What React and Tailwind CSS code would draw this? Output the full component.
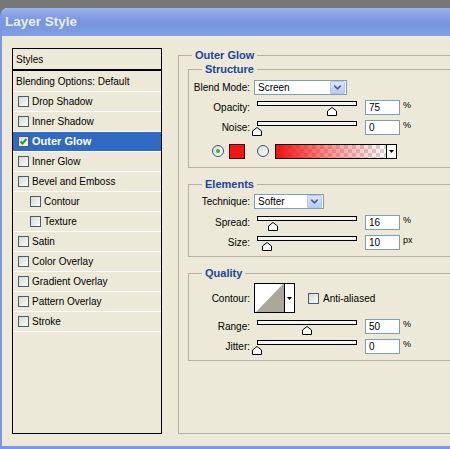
import { ChevronDown } from 'lucide-react'

const STYLE_ROWS = [
  { label: 'Drop Shadow' },
  { label: 'Inner Shadow' },
  { label: 'Outer Glow', checked: true, selected: true },
  { label: 'Inner Glow' },
  { label: 'Bevel and Emboss' },
  { label: 'Contour', indent: true },
  { label: 'Texture', indent: true },
  { label: 'Satin' },
  { label: 'Color Overlay' },
  { label: 'Gradient Overlay' },
  { label: 'Pattern Overlay' },
  { label: 'Stroke' },
]

function Checkbox({ checked }) {
  return (
    <span className="flex h-[11px] w-[11px] shrink-0 items-center justify-center border border-[#4b5a76] bg-gradient-to-br from-[#d9d9d2] to-[#fbfbf9]">
      {checked && (
        <svg width="9" height="9" viewBox="0 0 9 9">
          <path d="M1.5 4.5 L3.5 6.5 L7.5 2" fill="none" stroke="#21a121" strokeWidth="2" />
        </svg>
      )}
    </span>
  )
}

function Radio({ on }) {
  return (
    <span className="flex h-[12px] w-[12px] shrink-0 items-center justify-center rounded-full border border-[#3d5378] bg-gradient-to-br from-[#dcdcd6] to-[#fbfbfa]">
      {on && <span className="h-[4px] w-[4px] rounded-full bg-[#3fae3f]" />}
    </span>
  )
}

function Select({ value, width }) {
  return (
    <div className={`flex h-[15px] items-center justify-between border border-[#7f9db9] bg-white pl-[3px] pr-[1px] ${width}`}>
      <span>{value}</span>
      <span className="flex h-[13px] w-[15px] items-center justify-center rounded-[1px] border border-[#b4c6f2] bg-gradient-to-b from-[#dbe5fd] to-[#b6cbf8]">
        <ChevronDown size={11} strokeWidth={3.5} color="#4d6185" />
      </span>
    </div>
  )
}

function Slider({ value }) {
  return (
    <div className="relative h-[16px] w-[100px] shrink-0">
      <div className="mt-[4px] h-[5px] w-[100px] border border-black bg-[#f6f5f0]" />
      <svg className="absolute top-[6px]" style={{ left: value - 5 }} width="10" height="9" viewBox="0 0 10 9">
        <path d="M0.5 8.5 L0.5 4 L5 0.5 L9.5 4 L9.5 8.5 Z" fill="#fff" stroke="#000" />
      </svg>
    </div>
  )
}

function Label({ children }) {
  return <span className="w-[61px] shrink-0 text-right">{children}</span>
}

function SliderRow({ label, value, pos, unit, className = '' }) {
  return (
    <div className={`flex h-[16px] items-center ${className}`}>
      <Label>{label}</Label>
      <div className="ml-[7px]">
        <Slider value={pos} />
      </div>
      <div className="ml-[8px] flex h-[15px] w-[35px] items-center border border-[#7f9db9] bg-white pl-[3px]">{value}</div>
      <span className="ml-[3px] -mt-[3px] text-[9px]">{unit}</span>
    </div>
  )
}

function Group({ title, className = '', children }) {
  return (
    <fieldset className={`border border-[#b3b09f] ${className}`}>
      <legend className="ml-[13px] px-[3px] text-[11px] font-bold leading-[14px] text-[#21449a]">{title}</legend>
      {children}
    </fieldset>
  )
}

export default function App() {
  return (
    <div className="h-[449px] w-[450px] overflow-hidden bg-[#777777] pt-[8px] font-['Liberation_Sans',Arial,sans-serif] text-[10px] text-black">
      <div className="flex h-[441px] w-[470px] flex-col rounded-tl-[7px] border-b-[3px] border-l-[2px] border-[#7b97df] bg-[#ece9d8]">
        <div className="flex h-[28px] shrink-0 items-center rounded-tl-[6px] bg-gradient-to-b from-[#9bb2ee] via-[#7793dd] to-[#80a0e6] pl-[3px] text-[13.5px] font-bold text-[#e9eefb]">
          Layer Style
        </div>

        <div className="flex pl-[10px] pt-[12px]">
          <div className="flex h-[386px] w-[150px] shrink-0 flex-col border border-black">
            <div className="flex h-[22px] items-center border-b-2 border-black pl-[3px]">Styles</div>
            <div className="flex h-[21px] items-center border-b border-white pl-[3px]">Blending Options: Default</div>
            {STYLE_ROWS.map(r => (
              <div
                key={r.label}
                className={`flex h-[20px] items-center gap-[3px] border-b border-white ${r.indent ? 'pl-[17px]' : 'pl-[5px]'} ${
                  r.selected ? 'bg-[#316ac5] text-[11px] font-bold text-white' : ''
                }`}
              >
                <Checkbox checked={r.checked} />
                <span>{r.label}</span>
              </div>
            ))}
          </div>

          <fieldset className="ml-[16px] h-[386px] w-[290px] border border-[#b3b09f] pl-[9px]">
            <legend className="ml-[4px] px-[3px] text-[11px] font-bold leading-[14px] text-[#21449a]">Outer Glow</legend>

            <Group title="Structure" className="pb-[8px]">
              <div className="mt-[4px] flex items-center">
                <Label>Blend Mode:</Label>
                <div className="ml-[4px]">
                  <Select value="Screen" width="w-[93px]" />
                </div>
              </div>
              <SliderRow label="Opacity:" value="75" pos={75} unit="%" className="mt-[4px]" />
              <SliderRow label="Noise:" value="0" pos={0} unit="%" className="mt-[4px]" />
              <div className="mt-[8px] flex h-[16px] items-center pl-[23px]">
                <Radio on />
                <span className="ml-[5px] h-[15px] w-[16px] border border-[#3a0000] bg-[#f21511]" />
                <span className="ml-[12px]">
                  <Radio />
                </span>
                <div className="ml-[6px] flex h-[15px] w-[122px] border border-black">
                  <div className="flex-1 bg-[linear-gradient(to_right,#f01010,rgba(255,40,40,0.55)_45%,rgba(255,255,255,0)),repeating-conic-gradient(#d4d4d4_0_25%,#ffffff_0_50%)] [background-size:100%_100%,8px_8px]" />
                  <div className="flex w-[10px] items-center justify-center border-l border-black bg-white">
                    <svg width="5" height="3" viewBox="0 0 5 3">
                      <path d="M0 0 L5 0 L2.5 3 Z" fill="#000" />
                    </svg>
                  </div>
                </div>
              </div>
            </Group>

            <Group title="Elements" className="mt-[9px] pb-[6px]">
              <div className="mt-[3px] flex items-center">
                <Label>Technique:</Label>
                <div className="ml-[4px]">
                  <Select value="Softer" width="w-[70px]" />
                </div>
              </div>
              <SliderRow label="Spread:" value="16" pos={16} unit="%" className="mt-[5px]" />
              <SliderRow label="Size:" value="10" pos={10} unit="px" className="mt-[4px]" />
            </Group>

            <Group title="Quality" className="mt-[9px] pb-[6px]">
              <div className="mt-[3px] flex h-[30px] items-center">
                <Label>Contour:</Label>
                <div className="ml-[4px] flex h-[30px] w-[41px] border border-black bg-white">
                  <svg width="29" height="28" viewBox="0 0 29 28">
                    <path d="M1 28 L28 0 L29 0 L29 28 Z" fill="#aca899" />
                  </svg>
                  <div className="flex flex-1 items-center justify-center border-l border-black bg-white">
                    <svg width="5" height="3" viewBox="0 0 5 3">
                      <path d="M0 0 L5 0 L2.5 3 Z" fill="#000" />
                    </svg>
                  </div>
                </div>
                <span className="ml-[13px]">
                  <Checkbox />
                </span>
                <span className="ml-[4px]">Anti-aliased</span>
              </div>
              <SliderRow label="Range:" value="50" pos={50} unit="%" className="mt-[5px]" />
              <SliderRow label="Jitter:" value="0" pos={0} unit="%" className="mt-[4px]" />
            </Group>
          </fieldset>
        </div>
      </div>
    </div>
  )
}
